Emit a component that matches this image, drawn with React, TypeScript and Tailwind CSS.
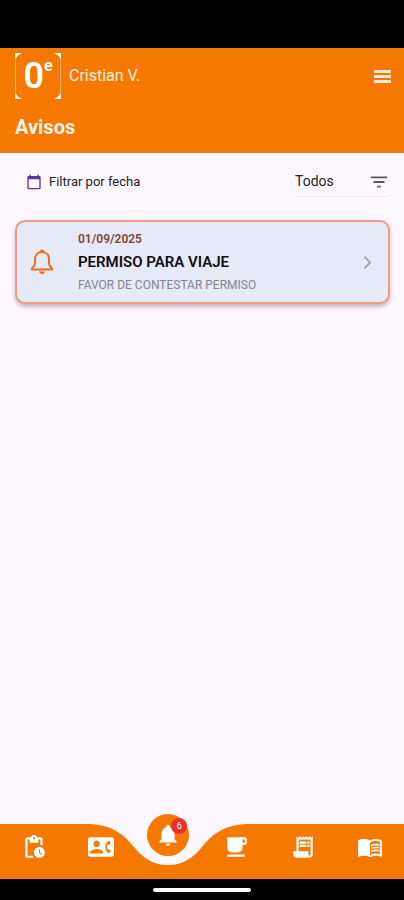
import React, { useState } from "react";
import {
  MdArrowForwardIos,
  MdCalendarToday,
  MdContactPhone,
  MdFilterList,
  MdLocalCafe,
  MdMenuBook,
  MdNotifications,
  MdPendingActions,
  MdReceiptLong,
} from "react-icons/md";

interface Aviso {
  id: number;
  fecha: string;
  titulo: string;
  detalle: string;
}

const avisos: Aviso[] = [
  {
    id: 1,
    fecha: "01/09/2025",
    titulo: "PERMISO PARA VIAJE",
    detalle: "FAVOR DE CONTESTAR PERMISO",
  },
];

const Logo = () => (
  <div className="relative w-[46px] h-[46px] flex items-center justify-center text-white">
    <svg viewBox="0 0 46 46" className="absolute inset-0 w-full h-full" fill="currentColor">
      <path d="M0 0H7Q2 2 0 7ZM46 0V7Q44 2 39 0ZM0 46V39Q2 44 7 46ZM46 46H39Q44 44 46 39Z" />
      <path d="M0.5 7v32M45.5 7v32" stroke="currentColor" strokeOpacity="0.45" />
    </svg>
    <span className="relative flex items-start leading-none">
      <span className="text-[36px] leading-9 font-semibold">0</span>
      <span className="text-[16px] leading-4 font-bold">e</span>
    </span>
  </div>
);

const MenuIcon = () => (
  <svg width="17" height="13" viewBox="0 0 17 13" fill="currentColor">
    <path d="M0 0h17v3H0zM0 5h17v3H0zM0 10h17v3H0z" />
  </svg>
);

const BellIcon = () => (
  <svg
    width="24"
    height="28"
    viewBox="0 0 24 28"
    fill="none"
    stroke="currentColor"
    strokeWidth="2"
    strokeLinejoin="round"
    strokeLinecap="round"
    className="shrink-0"
  >
    <path d="M12 4C8 4 5.2 6.8 5 10.8V15C5 17.6 3.6 18.8 2 20.4V21.4H22V20.4C20.4 18.8 19 17.6 19 15V10.8C18.8 6.8 16 4 12 4Z" />
    <path d="M9.8 3.8a2.2 2.2 0 0 1 4.4 0zM9.2 23.6h5.6a2.8 2.4 0 0 1-5.6 0z" fill="currentColor" stroke="none" />
  </svg>
);

const Header = () => (
  <header className="bg-[#f57900] text-white px-[15px] pt-[5px] pb-3">
    <div className="flex items-center gap-2">
      <Logo />
      <span className="flex-1 text-[16px] leading-6 text-[#fff0e0]">Cristian V.</span>
      <button aria-label="Menú" className="text-[#ffe6d5] -mr-[2px]">
        <MenuIcon />
      </button>
    </div>
    <h1 className="mt-[14px] text-[20px] leading-7 font-bold text-[#fff4ea]">Avisos</h1>
  </header>
);

const Filters = () => {
  const [tipo, setTipo] = useState("Todos");

  return (
    <div className="flex items-center justify-between pl-[26px] pr-[14px] pt-[14px]">
      <button className="flex items-center gap-[7px] text-[13px] leading-4 text-[#252128]">
        <MdCalendarToday size={16} className="text-[#5b35a0]" />
        Filtrar por fecha
      </button>

      <div className="relative w-[95px] border-b border-[#efe8f0]">
        <select
          aria-label="Tipo de aviso"
          value={tipo}
          onChange={(e) => setTipo(e.target.value)}
          className="w-full h-[29px] appearance-none bg-transparent text-[14px] text-[#252128] outline-none"
        >
          <option>Todos</option>
          <option>Leídos</option>
          <option>No leídos</option>
        </select>
        <MdFilterList
          size={22}
          className="absolute right-0 top-1 text-[#5a565c] pointer-events-none"
        />
      </div>
    </div>
  );
};

const AvisoCard = ({ aviso }: { aviso: Aviso }) => (
  <button className="w-full flex items-center rounded-[10px] border-2 border-[#f09a80] bg-[#e6e9f6] px-[13px] py-[7px] text-left shadow-[0_3px_4px_rgba(0,0,0,0.25)]">
    <span className="text-[#f26a1b]">
      <BellIcon />
    </span>
    <span className="flex-1 flex flex-col pl-6">
      <span className="text-[12px] leading-5 font-semibold text-[#7d4636]">{aviso.fecha}</span>
      <span className="text-[15px] leading-[26px] font-semibold text-[#0e0e14]">{aviso.titulo}</span>
      <span className="text-[12px] leading-5 text-[#85858f]">{aviso.detalle}</span>
    </span>
    <MdArrowForwardIos size={15} className="text-[#95959e]" />
  </button>
);

const navLeft = [
  { label: "Pendientes", icon: MdPendingActions },
  { label: "Contactos", icon: MdContactPhone },
];

const navRight = [
  { label: "Cafetería", icon: MdLocalCafe },
  { label: "Recibos", icon: MdReceiptLong },
  { label: "Lecturas", icon: MdMenuBook },
];

const NavItem = ({ label, icon: Icon }: { label: string; icon: React.ElementType }) => (
  <a href="#" aria-label={label} className="flex justify-center pt-[10px]">
    <Icon size={26} />
  </a>
);

const BottomNav = () => (
  <nav className="relative h-[55px] text-white">
    {/* bar with the notch under the third column */}
    <div className="absolute inset-0 flex">
      <div className="w-[calc(41.667%-84px)] bg-[#f57900]" />
      <svg viewBox="0 0 168 55" className="w-[168px] h-[55px] shrink-0">
        <path
          d="M0 0C26 0 38 8 50 23C60 35 70 41 84 41C98 41 108 35 118 23C130 8 142 0 168 0V55H0Z"
          fill="#f57900"
        />
      </svg>
      <div className="flex-1 bg-[#f57900]" />
    </div>

    <div className="relative grid grid-cols-6">
      {navLeft.map((item) => (
        <NavItem key={item.label} {...item} />
      ))}
      <div className="flex justify-center">
        <a
          href="#"
          aria-label="Avisos"
          className="relative -mt-[10px] w-[42px] h-[42px] rounded-full bg-[#f57900] flex items-center justify-center"
        >
          <MdNotifications size={26} />
          <span className="absolute right-[2px] top-1 w-4 h-4 rounded-full bg-[#e8302c] text-[9px] leading-4 text-center">
            6
          </span>
        </a>
      </div>
      {navRight.map((item) => (
        <NavItem key={item.label} {...item} />
      ))}
    </div>
  </nav>
);

export default function App() {
  return (
    <div className="min-h-screen flex flex-col bg-[#fef7ff] font-['Roboto',sans-serif]">
      <div className="h-12 bg-black" />
      <Header />
      <main className="flex-1">
        <Filters />
        <section className="pl-[15px] pr-[14px] pt-[23px] flex flex-col gap-3">
          {avisos.map((aviso) => (
            <AvisoCard key={aviso.id} aviso={aviso} />
          ))}
        </section>
      </main>
      <BottomNav />
      <div className="h-[21px] bg-black flex items-center justify-center">
        <div className="w-[98px] h-1 rounded-full bg-white" />
      </div>
    </div>
  );
}
